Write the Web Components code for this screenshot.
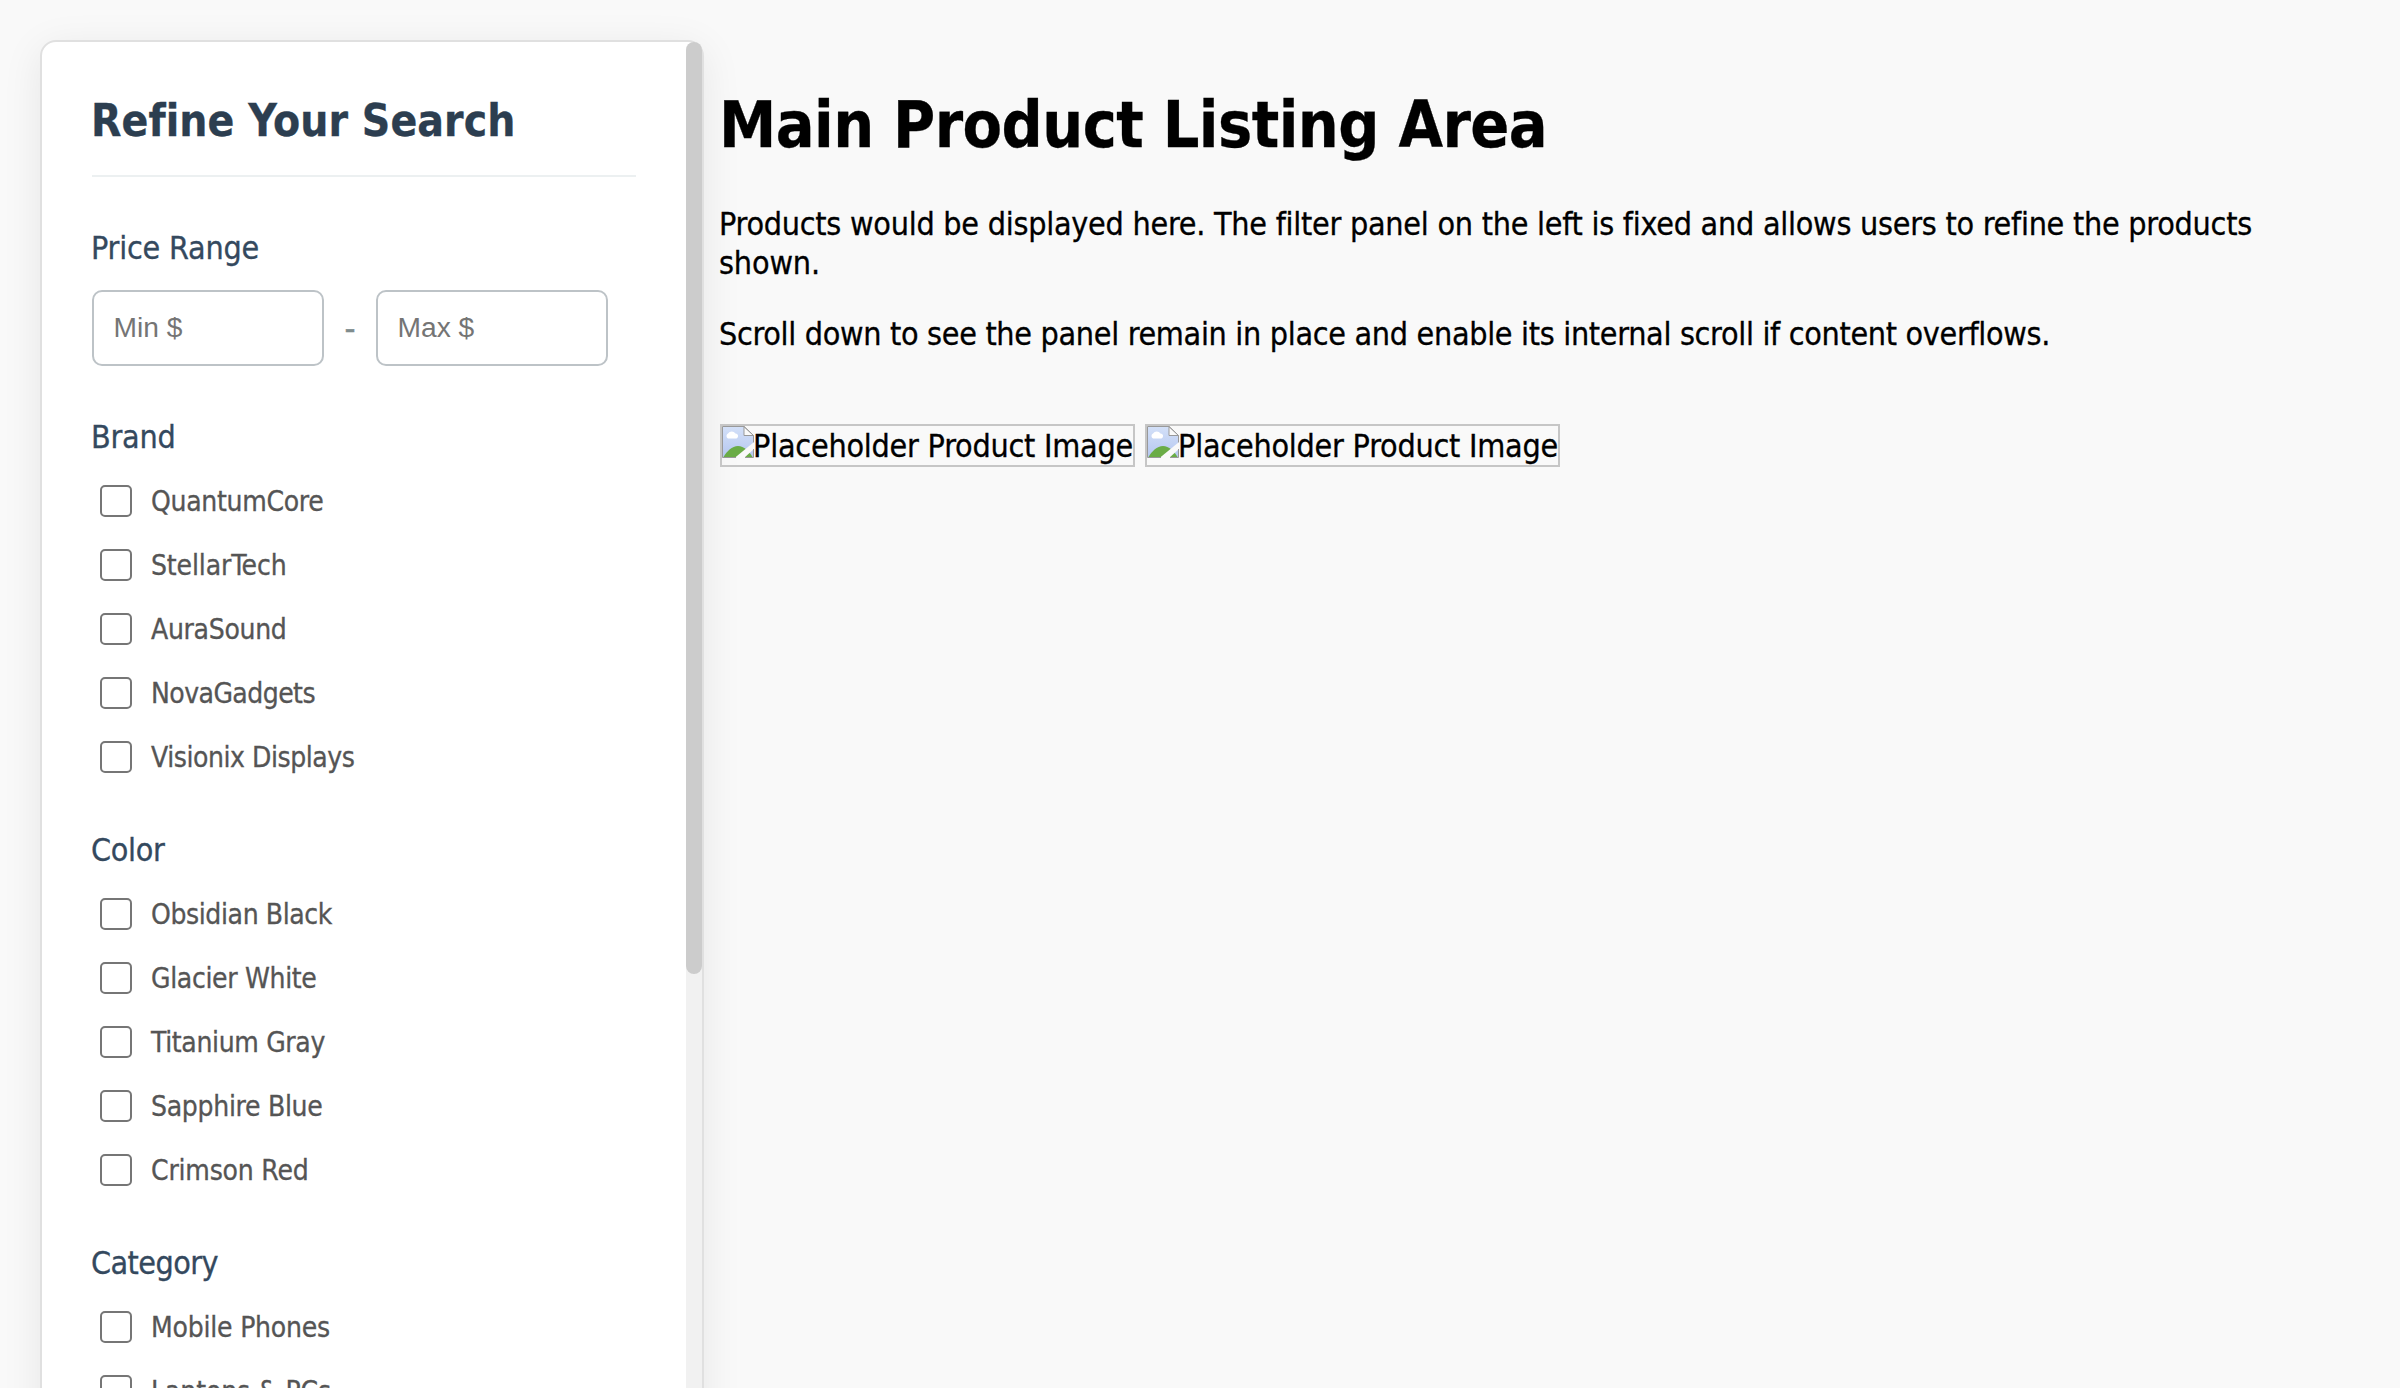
<!DOCTYPE html>
<html lang="en">
<head>
<meta charset="utf-8">
<title>Product Listing</title>
<style>
html,body{margin:0;height:100%;overflow:hidden;background:#f9f9f9;color:#000;font-family:"DejaVu Sans Condensed","DejaVu Sans",sans-serif}
</style>
</head>
<body>
<catalog-page>
  <filter-panel slot="side" heading="Refine Your Search" extent="423">
    <filter-group heading="Price Range" extent="168">
      <price-range></price-range>
    </filter-group>
    <filter-group heading="Brand" extent="84.5">
      <check-option extent="172.5">QuantumCore</check-option>
      <check-option extent="135.5">StellarTech</check-option>
      <check-option extent="135.5">AuraSound</check-option>
      <check-option extent="164">NovaGadgets</check-option>
      <check-option extent="203.5">Visionix Displays</check-option>
    </filter-group>
    <filter-group heading="Color" extent="73.5">
      <check-option extent="181">Obsidian Black</check-option>
      <check-option extent="165.5">Glacier White</check-option>
      <check-option extent="174">Titanium Gray</check-option>
      <check-option extent="171.5">Sapphire Blue</check-option>
      <check-option extent="157.5">Crimson Red</check-option>
    </filter-group>
    <filter-group heading="Category" extent="127">
      <check-option extent="179">Mobile Phones</check-option>
      <check-option extent="180">Laptops &amp; PCs</check-option>
    </filter-group>
  </filter-panel>
  <product-area></product-area>
</catalog-page>
<script>
const define = (name, html, setup) => customElements.define(name, class extends HTMLElement {
  connectedCallback() {
    if (this.shadowRoot) return;
    this.attachShadow({mode: 'open'}).innerHTML = html;
    if (setup) setup(this, this.shadowRoot);
  }
});

// A single line of text whose tracking is adjusted to the advance width given by "extent".
define('tracked-text', `<style>:host{display:inline-block;white-space:nowrap;vertical-align:top;margin-left:-1px;-webkit-text-stroke:var(--stroke,.3px)}</style><span></span>`, (el, root) => {
  const span = root.querySelector('span');
  const text = el.getAttribute('text');
  span.textContent = text;
  const extent = parseFloat(el.getAttribute('extent'));
  if (extent) span.style.letterSpacing = ((extent - span.getBoundingClientRect().width) / text.length).toFixed(3) + 'px';
});

function tracked(text, extent) {
  const t = document.createElement('tracked-text');
  t.setAttribute('text', text);
  t.setAttribute('extent', extent || 0);
  return t;
}

define('catalog-page', `<style>
:host{display:flex;align-items:flex-start;box-sizing:border-box;height:100vh;overflow:hidden;padding:40px 40px 0}
main{padding:46px 0 0 16px;flex:1}
</style><slot name="side"></slot><main><slot></slot></main>`);

define('filter-panel', `<style>
:host{display:flex;flex:none;box-sizing:border-box;width:664px;height:1400px;background:#fff;border:2px solid #e0e0e0;border-radius:16px;box-shadow:0 8px 40px rgba(0,0,0,.08)}
.body{flex:1;height:100%;overflow:hidden;box-sizing:border-box;padding:51px 50px 0}
h2{margin:0 0 51px;padding-bottom:26px;border-bottom:2px solid #ecf0f1;color:#2c3e50;font-size:44px;line-height:56px;font-weight:700}
.track{width:16px;background:#f1f1f1;border-radius:8px 8px 0 0}
.thumb{height:932px;background:#ccc;border-radius:8px}
</style><div class="body"><h2></h2><slot></slot></div><div class="track"><div class="thumb"></div></div>`,
(el, root) => root.querySelector('h2').append(tracked(el.getAttribute('heading'), el.getAttribute('extent'))));

define('filter-group', `<style>
:host{display:block;margin-bottom:51px}
h3{margin:0 0 2px;color:#34495e;font-size:32px;line-height:40px;font-weight:400}
</style><h3></h3><slot></slot>`,
(el, root) => root.querySelector('h3').append(tracked(el.getAttribute('heading'), el.getAttribute('extent'))));

define('price-range', `<style>
:host{display:flex;align-items:center;padding-top:20px}
input{box-sizing:border-box;width:232px;height:76px;margin:0;padding:0 19.5px 2px;border:2px solid #bdc3c7;border-radius:10px;background:#fff;outline:0;font:28.2px "Liberation Sans",sans-serif}
input::placeholder{color:#757575}
span{width:52px;text-align:center;color:#7f8c8d;font-size:34px;line-height:40px;-webkit-text-stroke:.4px}
</style><input placeholder="Min $"><span>-</span><input placeholder="Max $">`);

define('check-option', `<style>
:host{display:flex;align-items:center;height:32px;padding:26px 0 6px 8px;gap:20px;color:#555;font-size:28px;line-height:32px}
i{box-sizing:border-box;width:32px;height:32px;border:2px solid #767676;border-radius:5px;background:#fff}
tracked-text{padding-top:2px}
</style><i></i>`, (el, root) => root.append(tracked(el.textContent.trim(), el.getAttribute('extent'))));

define('missing-image', `<style>
:host{display:flex;border:2px solid #c6c6c6;font-size:32px;line-height:38px}
svg{width:32px;height:32px;flex:none}
tracked-text{padding-top:1px}
</style><svg viewBox="0 0 32 32">
<defs><linearGradient id="g" x1="0" y1="0" x2="0" y2="1"><stop offset="0" stop-color="#d3e0f8"/><stop offset="1" stop-color="#b5c7f0"/></linearGradient></defs>
<path d="M1 1H22L31 10V31H1Z" fill="url(#g)"/>
<path d="M6 12.500a2.800 2.800 0 0 1 0-5 4.500 4.500 0 0 1 7.500 0 2.600 2.600 0 0 1 1 5Z" fill="#fff"/>
<path d="M1.500 31C5 25 10 20 16 20s11 5 14.500 11Z" fill="#6aac46"/>
<path d="M32 16V23L22 32H12.500Z" fill="#f9f9f9"/>
<path d="M22 .5V9.500H31.500Z" fill="#fafafa" stroke="#999"/>
<path d="M14 31.500H.5V.5H22L31.500 9.500V16.500M31.500 23V31.500H23" fill="none" stroke="#999"/>
</svg>`, (el, root) => root.append(tracked('Placeholder Product Image', 380)));

define('product-area', `<style>
:host{display:block}
h1{margin:0 0 41px;font-size:64px;line-height:78px;font-weight:700}
p{margin:0 0 32px;font-size:32px;line-height:39px}
p tracked-text{display:block}
.row{display:flex;gap:10px;padding-top:38px}
</style><h1></h1><p></p><p></p><div class="row"><missing-image></missing-image><missing-image></missing-image></div>`,
(el, root) => {
  root.querySelector('h1').append(tracked('Main Product Listing Area', 828));
  const [a, b] = root.querySelectorAll('p');
  a.append(tracked('Products would be displayed here. The filter panel on the left is fixed and allows users to refine the products', 1533),
           tracked('shown.', 101));
  b.append(tracked('Scroll down to see the panel remain in place and enable its internal scroll if content overflows.', 1331));
});
</script>
</body>
</html>
